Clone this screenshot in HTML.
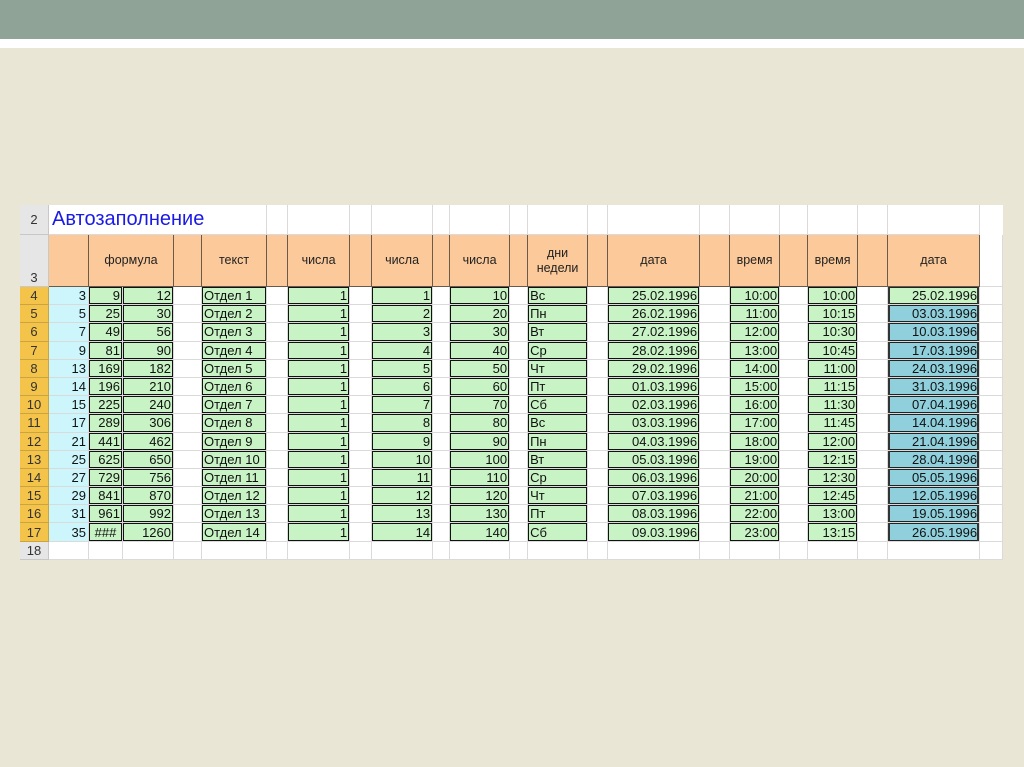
<!DOCTYPE html>
<html><head><meta charset="utf-8"><style>
body{margin:0;width:1024px;height:767px;background:#e9e6d5;position:relative;overflow:hidden;font-family:"Liberation Sans",Arial,sans-serif}
.bar{position:absolute;left:0;top:0;width:1024px;height:39px;background:#8fa396}
.wl{position:absolute;left:0;top:39px;width:1024px;height:9px;background:#fff}
table{position:absolute;left:20px;top:205px;border-collapse:separate;border-spacing:0;table-layout:fixed;width:983px;background:#fff;font-size:13px}
td,th{padding:0 2px;border-right:1px solid #dadada;border-bottom:1px solid #dadada;height:17.2px;line-height:17px;text-align:right;white-space:nowrap;overflow:hidden;color:#111}
th{font-weight:normal;text-align:center;background:#f4c44a;border-color:#c9a440;color:#333}
th.gr{background:#e6e6e6;border-color:#c8c8c8}
.a{background:#ccf6fb}
.g{background:#c8f3c4;box-shadow:inset 0 0 0 1px #111}
.l{text-align:left}
.b{background:#8fd0dc;box-shadow:inset 0 0 0 1px #222}
.s{box-shadow:inset 2px 0 0 #333,inset -2px 0 0 #333,inset 0 0 0 1px #222}
.h{background:#fcca9a;text-align:center;border-right:1px solid #6a5a4a;border-bottom:1px solid #6a5a4a;font-size:12.5px;line-height:15px;color:#222}
.t td{height:29px}
.hr td,.hr th{height:51px}
</style></head><body>
<div class="bar"></div><div class="wl"></div>
<table>
<colgroup><col style="width:29px"><col style="width:40px"><col style="width:34px"><col style="width:51px"><col style="width:28px"><col style="width:65px"><col style="width:21px"><col style="width:62px"><col style="width:22px"><col style="width:61px"><col style="width:17px"><col style="width:60px"><col style="width:18px"><col style="width:60px"><col style="width:20px"><col style="width:92px"><col style="width:30px"><col style="width:50px"><col style="width:28px"><col style="width:50px"><col style="width:30px"><col style="width:92px"><col style="width:23px"></colgroup>
<tr class="t"><th class="gr" style="height:29px">2</th><td colspan="5" style="text-align:left;color:#1a1ae6;font-size:20px;padding-left:3px">Автозаполнение</td><td></td><td></td><td></td><td></td><td></td><td></td><td></td><td></td><td></td><td></td><td></td><td></td><td></td><td></td><td></td><td></td></tr>
<tr class="hr"><th class="gr" style="vertical-align:bottom">3</th><td class="h"></td><td class="h" colspan="2">формула</td><td class="h"></td><td class="h">текст</td><td class="h"></td><td class="h">числа</td><td class="h"></td><td class="h">числа</td><td class="h"></td><td class="h">числа</td><td class="h"></td><td class="h">дни<br>недели</td><td class="h"></td><td class="h">дата</td><td class="h"></td><td class="h">время</td><td class="h"></td><td class="h">время</td><td class="h"></td><td class="h">дата</td><td></td></tr>
<tr><th>4</th><td class="a">3</td><td class="g">9</td><td class="g">12</td><td></td><td class="g l">Отдел 1</td><td></td><td class="g">1</td><td></td><td class="g">1</td><td></td><td class="g">10</td><td></td><td class="g l">Вс</td><td></td><td class="g">25.02.1996</td><td></td><td class="g">10:00</td><td></td><td class="g">10:00</td><td></td><td class="g s">25.02.1996</td><td></td></tr>
<tr><th>5</th><td class="a">5</td><td class="g">25</td><td class="g">30</td><td></td><td class="g l">Отдел 2</td><td></td><td class="g">1</td><td></td><td class="g">2</td><td></td><td class="g">20</td><td></td><td class="g l">Пн</td><td></td><td class="g">26.02.1996</td><td></td><td class="g">11:00</td><td></td><td class="g">10:15</td><td></td><td class="b s">03.03.1996</td><td></td></tr>
<tr><th>6</th><td class="a">7</td><td class="g">49</td><td class="g">56</td><td></td><td class="g l">Отдел 3</td><td></td><td class="g">1</td><td></td><td class="g">3</td><td></td><td class="g">30</td><td></td><td class="g l">Вт</td><td></td><td class="g">27.02.1996</td><td></td><td class="g">12:00</td><td></td><td class="g">10:30</td><td></td><td class="b s">10.03.1996</td><td></td></tr>
<tr><th>7</th><td class="a">9</td><td class="g">81</td><td class="g">90</td><td></td><td class="g l">Отдел 4</td><td></td><td class="g">1</td><td></td><td class="g">4</td><td></td><td class="g">40</td><td></td><td class="g l">Ср</td><td></td><td class="g">28.02.1996</td><td></td><td class="g">13:00</td><td></td><td class="g">10:45</td><td></td><td class="b s">17.03.1996</td><td></td></tr>
<tr><th>8</th><td class="a">13</td><td class="g">169</td><td class="g">182</td><td></td><td class="g l">Отдел 5</td><td></td><td class="g">1</td><td></td><td class="g">5</td><td></td><td class="g">50</td><td></td><td class="g l">Чт</td><td></td><td class="g">29.02.1996</td><td></td><td class="g">14:00</td><td></td><td class="g">11:00</td><td></td><td class="b s">24.03.1996</td><td></td></tr>
<tr><th>9</th><td class="a">14</td><td class="g">196</td><td class="g">210</td><td></td><td class="g l">Отдел 6</td><td></td><td class="g">1</td><td></td><td class="g">6</td><td></td><td class="g">60</td><td></td><td class="g l">Пт</td><td></td><td class="g">01.03.1996</td><td></td><td class="g">15:00</td><td></td><td class="g">11:15</td><td></td><td class="b s">31.03.1996</td><td></td></tr>
<tr><th>10</th><td class="a">15</td><td class="g">225</td><td class="g">240</td><td></td><td class="g l">Отдел 7</td><td></td><td class="g">1</td><td></td><td class="g">7</td><td></td><td class="g">70</td><td></td><td class="g l">Сб</td><td></td><td class="g">02.03.1996</td><td></td><td class="g">16:00</td><td></td><td class="g">11:30</td><td></td><td class="b s">07.04.1996</td><td></td></tr>
<tr><th>11</th><td class="a">17</td><td class="g">289</td><td class="g">306</td><td></td><td class="g l">Отдел 8</td><td></td><td class="g">1</td><td></td><td class="g">8</td><td></td><td class="g">80</td><td></td><td class="g l">Вс</td><td></td><td class="g">03.03.1996</td><td></td><td class="g">17:00</td><td></td><td class="g">11:45</td><td></td><td class="b s">14.04.1996</td><td></td></tr>
<tr><th>12</th><td class="a">21</td><td class="g">441</td><td class="g">462</td><td></td><td class="g l">Отдел 9</td><td></td><td class="g">1</td><td></td><td class="g">9</td><td></td><td class="g">90</td><td></td><td class="g l">Пн</td><td></td><td class="g">04.03.1996</td><td></td><td class="g">18:00</td><td></td><td class="g">12:00</td><td></td><td class="b s">21.04.1996</td><td></td></tr>
<tr><th>13</th><td class="a">25</td><td class="g">625</td><td class="g">650</td><td></td><td class="g l">Отдел 10</td><td></td><td class="g">1</td><td></td><td class="g">10</td><td></td><td class="g">100</td><td></td><td class="g l">Вт</td><td></td><td class="g">05.03.1996</td><td></td><td class="g">19:00</td><td></td><td class="g">12:15</td><td></td><td class="b s">28.04.1996</td><td></td></tr>
<tr><th>14</th><td class="a">27</td><td class="g">729</td><td class="g">756</td><td></td><td class="g l">Отдел 11</td><td></td><td class="g">1</td><td></td><td class="g">11</td><td></td><td class="g">110</td><td></td><td class="g l">Ср</td><td></td><td class="g">06.03.1996</td><td></td><td class="g">20:00</td><td></td><td class="g">12:30</td><td></td><td class="b s">05.05.1996</td><td></td></tr>
<tr><th>15</th><td class="a">29</td><td class="g">841</td><td class="g">870</td><td></td><td class="g l">Отдел 12</td><td></td><td class="g">1</td><td></td><td class="g">12</td><td></td><td class="g">120</td><td></td><td class="g l">Чт</td><td></td><td class="g">07.03.1996</td><td></td><td class="g">21:00</td><td></td><td class="g">12:45</td><td></td><td class="b s">12.05.1996</td><td></td></tr>
<tr><th>16</th><td class="a">31</td><td class="g">961</td><td class="g">992</td><td></td><td class="g l">Отдел 13</td><td></td><td class="g">1</td><td></td><td class="g">13</td><td></td><td class="g">130</td><td></td><td class="g l">Пт</td><td></td><td class="g">08.03.1996</td><td></td><td class="g">22:00</td><td></td><td class="g">13:00</td><td></td><td class="b s">19.05.1996</td><td></td></tr>
<tr><th>17</th><td class="a">35</td><td class="g" style="text-align:center">###</td><td class="g">1260</td><td></td><td class="g l">Отдел 14</td><td></td><td class="g">1</td><td></td><td class="g">14</td><td></td><td class="g">140</td><td></td><td class="g l">Сб</td><td></td><td class="g">09.03.1996</td><td></td><td class="g">23:00</td><td></td><td class="g">13:15</td><td></td><td class="b s">26.05.1996</td><td></td></tr>
<tr><th class="gr">18</th><td></td><td></td><td></td><td></td><td></td><td></td><td></td><td></td><td></td><td></td><td></td><td></td><td></td><td></td><td></td><td></td><td></td><td></td><td></td><td></td><td></td><td></td></tr>
</table>
</body></html>
